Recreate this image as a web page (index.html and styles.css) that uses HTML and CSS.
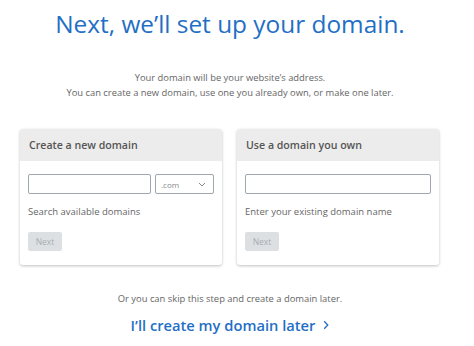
FILE: index.html
```html
<!DOCTYPE html>
<html lang="en">
<head>
<meta charset="utf-8">
<title>Set up your domain</title>
<link rel="stylesheet" href="styles.css">
</head>
<body>
<main class="page">
  <h1 class="title">Next, we’ll set up your domain.</h1>
  <p class="intro">Your domain will be your website’s address.<br>You can create a new domain, use one you already own, or make one later.</p>
  <div class="cards">
    <section class="card">
      <div class="card-head">Create a new domain</div>
      <div class="card-body">
        <div class="row">
          <div class="field field-grow"></div>
          <div class="field select"><span class="tld">.com</span>
            <svg class="chev" width="8" height="5" viewBox="0 0 8 5"><path d="M1 1l3 3 3-3" fill="none" stroke="#888" stroke-width="1"/></svg>
          </div>
        </div>
        <div class="hint">Search available domains</div>
        <div class="btn">Next</div>
      </div>
    </section>
    <section class="card">
      <div class="card-head">Use a domain you own</div>
      <div class="card-body">
        <div class="row">
          <div class="field field-grow"></div>
        </div>
        <div class="hint">Enter your existing domain name</div>
        <div class="btn">Next</div>
      </div>
    </section>
  </div>
  <p class="skip">Or you can skip this step and create a domain later.</p>
  <a class="later" href="#">I’ll create my domain later
    <svg class="later-chev" width="6" height="10" viewBox="0 0 6 10"><path d="M1.2 1.2l3.6 3.8-3.6 3.8" fill="none" stroke="#1f6fc5" stroke-width="1.3"/></svg>
  </a>
</main>
</body>
</html>
```

FILE: styles.css
```css
html, body {
  margin: 0;
  padding: 0;
  background: #fff;
}
body {
  font-family: "Open Sans", "Liberation Sans", sans-serif;
  color: #666;
}
.page {
  width: 460px;
  display: flex;
  flex-direction: column;
  align-items: center;
}
.title {
  margin: 9px 0 0;
  font-size: 24.4px;
  line-height: 29px;
  font-weight: 400;
  color: #1f6fc5;
}
.intro {
  margin: 32px 0 0;
  font-size: 9.4px;
  line-height: 15px;
  text-align: center;
  color: #666;
}
.cards {
  margin-top: 29px;
  display: flex;
  gap: 15px;
  align-self: flex-start;
  margin-left: 20px;
}
.card {
  width: 202px;
  height: 136px;
  background: #fff;
  border-radius: 3px;
  box-shadow: 0 1px 3px rgba(0,0,0,0.25);
  overflow: hidden;
}
.card-head {
  height: 32px;
  background: #ececec;
  padding-left: 9px;
  font-size: 10.6px;
  line-height: 32px;
  font-weight: 600;
  color: #555;
}
.card-body {
  padding: 13px 8px 0;
}
.row {
  display: flex;
  gap: 4px;
}
.field {
  height: 20px;
  box-sizing: border-box;
  border: 1px solid #9ea6ae;
  border-radius: 2px;
  background: #fff;
}
.field-grow {
  flex: 1;
}
.select {
  width: 59px;
  display: flex;
  align-items: center;
  justify-content: space-between;
  padding: 0 7px 0 5px;
}
.tld {
  font-size: 8px;
  color: #888;
}
.hint {
  margin-top: 10px;
  font-size: 9.5px;
  line-height: 15px;
  color: #666;
}
.btn {
  margin-top: 13px;
  width: 34px;
  height: 19px;
  background: #dde0e3;
  border-radius: 2px;
  font-size: 8.5px;
  line-height: 19px;
  text-align: center;
  color: #a9adb1;
}
.skip {
  margin: 26px 0 0;
  font-size: 9.4px;
  line-height: 15px;
  color: #666;
}
.later {
  margin-top: 9px;
  font-size: 14.7px;
  line-height: 20px;
  font-weight: 600;
  color: #1f6fc5;
  text-decoration: none;
  display: flex;
  align-items: center;
  gap: 8px;
}
```
